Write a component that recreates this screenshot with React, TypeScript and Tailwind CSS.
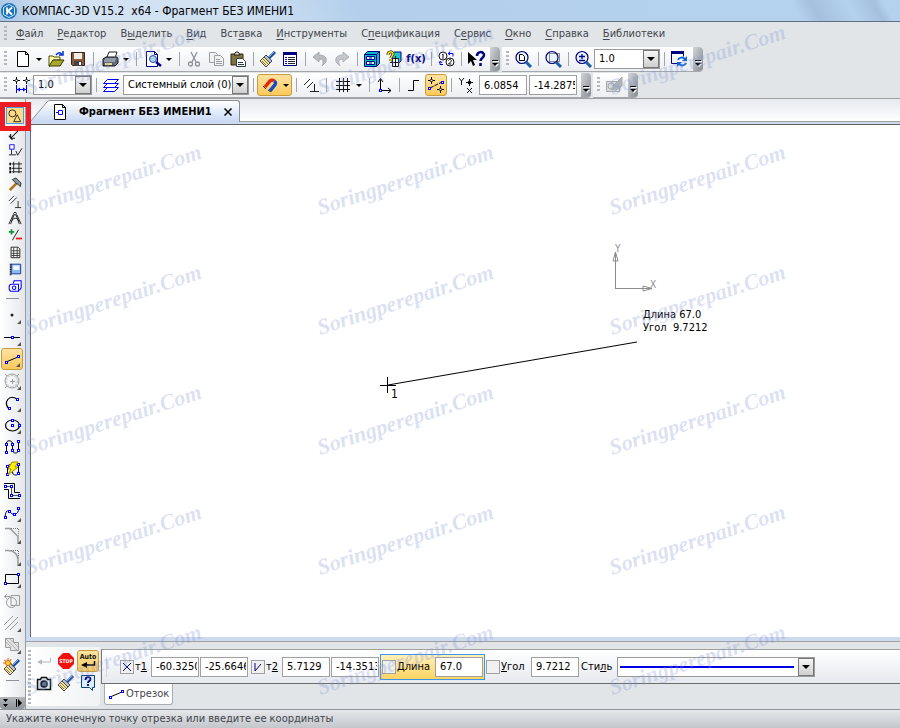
import type { ReactNode } from 'react';
import clsx from 'clsx';

const NAVY = '#000080';
const BLUE = '#0000ff';

const node = (x: number, y: number) => (
  <rect key={`${x}-${y}`} x={x - 0.5} y={y - 0.5} width="2" height="2" fill="#fff" stroke={BLUE} />
);

const brush = (
  <>
    <path d="M15 1L9 7" stroke="#1c4f9c" strokeWidth="3" />
    <path d="M14 1L9 6" stroke="#6fb1ea" />
    <path d="M6 4l6 6-2 2-6-6z" fill="#b9c3cc" stroke="#3c4650" />
    <path d="M4 6l6 6-4 4L0 10z" fill="#f3e3a8" stroke="#4a4a3a" />
    <path d="M3 8l5 5M2 10l4 4" stroke="#8c7a30" />
  </>
);

const lens = (
  <>
    <circle cx="7" cy="6.500" r="6" fill="#e8f4fb" stroke={NAVY} strokeWidth="1.200" />
    <path d="M11 11l5 5" stroke="#1d5fa8" strokeWidth="3" />
  </>
);

const ICONS: Record<string, ReactNode> = {
  new: <path d="M2.500 .5h8l3 3v12h-11zM10.500 .5v3h3" fill="#fff" stroke="#000" />,
  open: (
    <>
      <path d="M1 5h4l1 1h6v3H5l-3 6H1z" fill="#ffffb0" stroke="#4a4a00" />
      <path d="M5 9h11l-4 6H1z" fill="#a8a830" stroke="#3a3a00" />
      <path d="M8 4c2-3 5-3 6 0M11 4h4V0" fill="none" stroke="#0030d0" strokeWidth="1.500" />
    </>
  ),
  save: (
    <>
      <path d="M1.500 1.500h13v13h-12l-1-1z" fill="#8a5a3c" stroke="#33231a" />
      <path d="M4 2h8v6H4z" fill="#f1eee6" />
      <path d="M4 10h8v5H4z" fill="#444" />
      <path d="M9 11h2v3H9z" fill="#fff" />
    </>
  ),
  print: (
    <>
      <path d="M5 6l2-5h8l-2 6" fill="#fff" stroke="#222" />
      <path d="M1 8l3-2h11l1 2v4l-3 3H1z" fill="#5c6068" stroke="#15171a" />
      <path d="M3 8h11M2 10h11" stroke="#d5d8dd" />
      <path d="M3 12h7v2H3z" fill="#e2dc8c" />
    </>
  ),
  preview: (
    <>
      <path d="M1.500 .5h8l3 3v12h-11zM9.500 .5v3h3" fill="#fff" stroke={NAVY} />
      <circle cx="8" cy="8" r="3.500" fill="#a9d2f0" stroke="#2a4ca0" />
      <path d="M11 11l5 4" stroke={NAVY} strokeWidth="2.500" />
    </>
  ),
  cut: (
    <g fill="none" stroke="#8e9298" strokeWidth="1.300">
      <path d="M5 1l5 10M11 1L6 11" />
      <circle cx="4.500" cy="13" r="2" />
      <circle cx="11.500" cy="13" r="2" />
    </g>
  ),
  copy: (
    <g fill="#f2f2f2" stroke="#9a9ea3">
      <path d="M1.500 1.500h6l2 2v8h-8z" />
      <path d="M6.500 4.500h6l3 3v7h-9zM8 8.500h4M8 10.500h6M8 12.500h6" />
    </g>
  ),
  paste: (
    <>
      <path d="M1 3h12v11H1z" fill="#7c7440" stroke="#2c2914" />
      <path d="M4 4l1-2 1-1h2l1 1 1 2z" fill="#ded9ba" stroke="#222" />
      <path d="M6.500 7.500h6l3 3v5h-9zM8 11.500h5M8 13.500h6" fill="#fff" stroke="#303a48" />
    </>
  ),
  brush,
  props: (
    <>
      <path d="M1.500 1.500h13v13h-13z" fill="#fff" stroke={NAVY} />
      <path d="M1 1h14v3H1z" fill={NAVY} />
      <path d="M3 6.500h2M3 8.500h2M3 10.500h2M3 12.500h2" stroke={BLUE} />
      <path d="M6 6.500h7M6 8.500h7M6 10.500h7M6 12.500h7" stroke="#223" />
    </>
  ),
  undo: (
    <path d="M1 6l6-5v3c6 0 8 3 7 7l-4 4c2-4 2-7-3-7v3z" fill="#b9bdc2" stroke="#a4a8ad" />
  ),
  redo: (
    <path d="M15 6L9 1v3C3 4 1 7 2 11l4 4C4 11 4 8 9 8v3z" fill="#c3c7cb" stroke="#adb1b5" />
  ),
  library: (
    <>
      <path d="M.5 3.500l3-3h12v12l-3 3H.5z" fill="#00bcc8" stroke={NAVY} />
      <path d="M.5 3.500h12v12M12.500 3.500l3-3" fill="none" stroke={NAVY} />
      <path d="M2.500 5.500h8v3h-8zM2.500 10.500h8v3h-8z" fill="#dff" stroke={NAVY} />
      <path d="M5 7h3M5 12h3" stroke={NAVY} />
    </>
  ),
  variables: (
    <>
      <path d="M6 3l2-2h7v9l-2 2H6z" fill="#20c4cc" stroke={NAVY} />
      <path d="M6.500 7.500h6v8h-6zM4 11.500h10M9.500 5v11" fill="#fff" stroke="#111" />
      <path d="M2 4c0-4 5-4 5-1 0 2-2 2-2 4M5 8v2" fill="none" stroke="#333" strokeWidth="3" />
      <path d="M2 4c0-4 5-4 5-1 0 2-2 2-2 4M5 8v2" fill="none" stroke="#ffe200" strokeWidth="1.500" />
    </>
  ),
  swap: (
    <>
      <circle cx="5" cy="5" r="4" fill="#fff" stroke="#111" />
      <circle cx="12" cy="11" r="4" fill="#fff" stroke="#111" />
      <path d="M4 4l1-1v5M10.500 9.500c1-2 3-1 3 .5l-3 3h3" fill="none" stroke="#111" />
      <path d="M11 2.500h4v3M5 13.500H2v-3M1 12l1.500-2L4 12M12 1l-2 1.500L12 4" fill="none" stroke={BLUE} />
    </>
  ),
  whatsThis: (
    <>
      <path d="M0 1v12l3-3 2 5 2-1-2-5h4z" fill="#000" />
      <path d="M9 5c0-5 7-5 7-1 0 3-3.500 3-3.500 6M12.500 12v3" fill="none" stroke={NAVY} strokeWidth="2.500" />
    </>
  ),
  zoomPage: (
    <>
      {lens}
      <path d="M4.500 3.500h3l2 2v4h-5z" fill="#fff" stroke="#000" />
    </>
  ),
  zoomArea: (
    <>
      {lens}
      <path d="M4.500 2.500h10v8h-10z" fill="none" stroke="#222" strokeDasharray="1 1" />
    </>
  ),
  zoomStep: (
    <>
      {lens}
      <path d="M4 5.500h6M7 3v5M4 9.500h6" stroke={NAVY} strokeWidth="1.300" />
    </>
  ),
  refresh: (
    <>
      <path d="M.5 1.500h12v4M.5 1.500v11h6" fill="none" stroke={NAVY} />
      <path d="M0 0h13v3H0z" fill={NAVY} />
      <path d="M7 9c1-3 5-3 7-1M15 12c-1 3-5 3-7 1" fill="none" stroke="#1464dc" strokeWidth="2" />
      <path d="M16 5v5h-5zM6 16v-5h5z" fill="#1464dc" />
    </>
  ),
  step: (
    <>
      <path d="M0 3.500h7M3.500 0v7M10 3.500h7M13.500 0v7" stroke="#000" />
      <path d="M2 3.500L3.500 2 5 3.500 3.500 5zM12 3.500L13.500 2 15 3.500 13.500 5z" fill="#fff" stroke="#000" />
      <path d="M3.500 8v8M13.500 8v8M4 12.500h9" stroke={BLUE} />
      <path d="M4 12.500l3-2v4zM13 12.500l-3-2v4z" fill={BLUE} />
    </>
  ),
  layers: (
    <g fill="#fff" stroke={BLUE}>
      <path d="M.5 14.500l4-4h11l-4 4z" />
      <path d="M.5 10.500l4-4h11l-4 4z" />
      <path d="M.5 6.500l4-4h11l-4 4z" />
    </g>
  ),
  magnet: (
    <g fill="none" strokeWidth="3.500">
      <path d="M8 14l4-5c2-2 2-4 0-5" stroke="#1748c8" />
      <path d="M3 10l5-6c1-1 3-1 4 0" stroke="#e02a10" />
      <path d="M1 9l3 3M6 13l3 2" stroke="#333" strokeWidth="1" />
    </g>
  ),
  parallel: (
    <path d="M1 8l6-6M4 11l6-6M7 14.500h9M11.500 7v8" fill="none" stroke="#222" />
  ),
  grid: <path d="M4.500 1v14M8.500 1v14M12.500 1v14M1 4.500h14M1 8.500h14M1 12.500h14" stroke="#111" />,
  axes: (
    <>
      <path d="M4.500 2v11M4 13.500h11M2 5l2.500-3.500L7 5M12 11l3 2.500L12 16" fill="none" stroke="#000" />
      {node(4, 13)}
    </>
  ),
  ortho: <path d="M2 13.500h5.500v-10H13" fill="none" stroke="#000" />,
  snap: (
    <>
      <path d="M0 3.500h7M3.500 0v7M9 12.500h7M12.500 9v7" stroke="#000" />
      <path d="M2 3.500L3.500 2 5 3.500 3.500 5zM11 12.500l1.500-1.500 1.500 1.500-1.500 1.500z" fill="#ffe9a8" stroke="#000" />
      <path d="M2 11L14 5" stroke="#000" strokeDasharray="4 1" />
      {node(1, 11)}
      {node(14, 5)}
    </>
  ),
  coords: (
    <path
      d="M1 1l2.500 3L6 1M3.500 4v4M8 5.500h7M11.500 2v7M9.500 5.500l2-2 2 2-2 2zM9 11l5 5M14 11l-5 5"
      fill="none"
      stroke="#111"
    />
  ),
  sketch: (
    <g fill="#d5d8dc" stroke="#a6aaaf">
      <path d="M.5 4.500h13v10H.5z" />
      <circle cx="5" cy="9" r="3" />
      <path d="M5 12l5-6 6-6v9l-6 4z" fill="#b0b4b9" />
    </g>
  ),
  geometry: (
    <g fill="none" stroke="#1b1b1b">
      <circle cx="5" cy="5" r="4" />
      <path d="M10.500 6.500l-4 8h8z" />
    </g>
  ),
  dimension: (
    <path d="M3 14L14 3M3 9v5h5M1 11l4 5" fill="none" stroke="#111" strokeWidth="1.200" />
  ),
  marks: (
    <>
      <path d="M4 7v6M1 13.500h8M9 9l2 5 5-8" fill="none" stroke="#111" />
      <rect x="2" y="2" width="5" height="5" fill="#fff" stroke={BLUE} />
    </>
  ),
  table: (
    <>
      <path d="M6.500 2v13M12.500 2v13M4 4.500h12M4 9.500h12M4 13.500h12" stroke="#111" />
      <path d="M2.500 3v3M2.500 8v3M2.500 12v3" stroke="#111" strokeWidth="2" />
    </>
  ),
  hammer: (
    <>
      <path d="M2 15l8-8" stroke="#b0701c" strokeWidth="3" />
      <path d="M5 3l4-2 6 6-1 4-3-3-2-1z" fill="#8d969e" stroke="#23282c" />
    </>
  ),
  parametrize: <path d="M1 8l6-6M3 11l7-7M8 15.500h7M11.500 8v8" fill="none" stroke="#222" />,
  compass: (
    <g fill="none" stroke="#111">
      <path d="M7 4L3 15M9 4l4 11M4 12c2-5 6-5 9 0M1 15l5-11M15 15L10 4" />
      <circle cx="8" cy="3" r="1.500" fill="#fff" />
    </g>
  ),
  edit: (
    <>
      <path d="M1 4.500h6M4 1.500v6" stroke="#0a9a34" strokeWidth="2" />
      <path d="M9 12h7" stroke="#f01818" strokeWidth="2" />
      <path d="M5 14l7-12" stroke="#111" />
    </>
  ),
  spec: (
    <>
      <path d="M3.500 2.500h8l2 2v10h-10z" fill="#fff" stroke="#111" />
      <path d="M4 6.500h9M4 9.500h9M4 12h9M6.500 3v11M10.500 3v11" stroke="#333" />
    </>
  ),
  report: (
    <>
      <path d="M3.500 2.500h11v11h-11z" fill="#8fbaf0" stroke="#0a2f9c" />
      <path d="M6 4h7v5H6z" fill="#f4faff" />
      <path d="M3 2v13" stroke="#111" strokeWidth="2" strokeDasharray="1 1" />
    </>
  ),
  insert: (
    <g fill="#fff" stroke={BLUE} strokeWidth="1.200">
      <path d="M6 5l1-3h8v8l-2 3" />
      <path d="M4 6h8v8H3c-3-2-2-8 1-8z" />
      <circle cx="7" cy="10" r="2" />
    </g>
  ),
  point: <circle cx="8" cy="8" r="1.500" fill="#222" />,
  auxLine: (
    <>
      <path d="M0 8.500h16" stroke="#000" />
      {node(8, 8)}
    </>
  ),
  segment: (
    <>
      <path d="M2 11L14 6" stroke="#000" />
      {node(2, 11)}
      {node(14, 5)}
    </>
  ),
  circle: (
    <g fill="none" stroke="#9c9c9c">
      <circle cx="8" cy="8" r="7" />
      <circle cx="8" cy="8" r="5.500" strokeDasharray="2 1" strokeOpacity="0.6" />
      <path d="M6 8.500h5M8.500 6v5M1 1l2 2M15 1l-2 2M1 15l2-2M15 15l-2-2" />
    </g>
  ),
  arc: (
    <>
      <path d="M5 14C-1 7 5-1 13 4" fill="none" stroke="#000" strokeWidth="1.200" />
      {node(5, 13)}
      {node(13, 4)}
    </>
  ),
  ellipse: (
    <>
      <ellipse cx="8.500" cy="8.500" rx="7" ry="5.500" fill="none" stroke="#000" strokeWidth="1.200" />
      {node(8, 3)}
      {node(8, 8)}
      {node(15, 8)}
    </>
  ),
  spline: (
    <>
      <path d="M2.500 14V4c0-3 5-3 6 0v7c0 4 6 4 6 0V2" fill="none" stroke="#000" />
      {[[2, 13], [2, 5], [8, 5], [8, 11], [14, 11], [14, 2]].map(([x, y]) => node(x, y))}
    </>
  ),
  autoLine: (
    <>
      <path d="M3.500 14V6c0-3 5-3 5 0v5c0 4 6 4 6 0V3" fill="none" stroke="#000" />
      {[[3, 5], [3, 13], [14, 3], [14, 12]].map(([x, y]) => node(x, y))}
      <path d="M8 1h6l-3 5h3L4 14l3-6H4z" fill="#ffee00" stroke="#a08c00" />
    </>
  ),
  polyline: (
    <>
      <path d="M0 .5h10.500v9H16M0 6.500h4.500v9H16" fill="none" stroke="#000" />
      <path d="M2 3.500h5.500v9H15" fill="none" stroke="#555" />
      {[[1, 3], [7, 3], [7, 12], [15, 12]].map(([x, y]) => node(x, y))}
    </>
  ),
  bezier: (
    <>
      <path d="M1 12c1-9 4-6 6-4s7 3 8-5" fill="none" stroke={NAVY} />
      {[[1, 12], [5, 6], [10, 9], [14, 3]].map(([x, y]) => node(x, y))}
    </>
  ),
  chamfer: (
    <>
      <path d="M1 1.500h5l8 8V16" fill="none" stroke="#9a9a9a" strokeWidth="1.500" />
      <path d="M7 1.500h7.500v7" fill="none" stroke="#777" strokeDasharray="1 1" />
    </>
  ),
  fillet: (
    <>
      <path d="M1 1.500h3c6 0 10 4 10 9V16" fill="none" stroke="#9a9a9a" strokeWidth="1.500" />
      <path d="M7 1.500h7.500v7" fill="none" stroke="#777" strokeDasharray="1 1" />
    </>
  ),
  rectangle: (
    <>
      <path d="M1.500 3.500h13v9h-13z" fill="none" stroke="#000" />
      {node(14, 3)}
      {node(1, 12)}
    </>
  ),
  contour: (
    <g fill="none" stroke="#9a9a9a">
      <path d="M7 2.500h8.500v10H7zM0 3.500h6M3 1L.5 3.500 3 6" />
      <circle cx="7.500" cy="9.500" r="5" />
    </g>
  ),
  equidistant: <path d="M0 10L9 1M1 15L14 2M6 15l8-8" fill="none" stroke="#9a9a9a" />,
  hatch: (
    <>
      <path d="M1.500 1.500h8v4h5v8h-8v-3h-5z" fill="#e3e3e3" stroke="#9a9a9a" />
      <path d="M2 5l5 5M2 2l11 11M6 2l8 8" stroke="#b0b0b0" />
    </>
  ),
  styleBrush: (
    <>
      {brush}
      <circle cx="4" cy="4" r="2.500" fill="#ffdc20" stroke="#e05a10" />
      <path d="M4-1v2M-1 4h2M7 0L6 2M0 1l2 1M8 5L6 4" stroke="#e05a10" />
    </>
  ),
  enter: (
    <>
      <path d="M14.500 5v4H5" fill="none" stroke="#b4b8bc" />
      <path d="M6 6.500v5L1 9z" fill="#b4b8bc" />
    </>
  ),
  stop: (
    <>
      <path d="M5 0h6l5 5v6l-5 5H5l-5-5V5z" fill="#f01010" />
      <text x="8" y="10" fontSize="5" fontWeight="700" textAnchor="middle" fill="#fff">
        STOP
      </text>
    </>
  ),
  auto: (
    <>
      <text x="8" y="6" fontSize="7" fontWeight="700" textAnchor="middle" fill="#111">
        Auto
      </text>
      <path d="M14.500 8v4H5" fill="none" stroke="#000" strokeWidth="1.500" />
      <path d="M7 9v6l-6-3z" fill="#000" />
    </>
  ),
  camera: (
    <>
      <path d="M1.500 4.500h3l1-2h5l1 2h3v10h-13z" fill="#dde7ee" stroke="#111" strokeWidth="1.500" />
      <circle cx="8" cy="9" r="3" fill="#5c7890" stroke="#111" strokeWidth="1.500" />
    </>
  ),
  help: (
    <>
      <path d="M1.500 .5h13v12h-2v3l-3-3h-8z" fill="#dceefa" stroke="#0a3f78" />
      <path d="M5.500 5c0-4 5-3.500 5-1 0 2-2.500 2-2.500 4M8 9v2" fill="none" stroke={NAVY} strokeWidth="1.800" />
    </>
  ),
  fragment: (
    <>
      <path d="M2.500 .5h8l3 3v12h-11zM10.500 .5v3h3" fill="#fff" stroke="#000" />
      <path d="M4 8.500h2.500v-2h4v4h-4v-2" fill="none" stroke={BLUE} />
    </>
  ),
};

const Icon = ({ name, small }: { name: string; small?: boolean }) => (
  <svg
    viewBox="0 0 16 16"
    className={clsx('shrink-0 overflow-visible', small ? 'size-[14px]' : 'size-4')}
    aria-hidden="true"
  >
    {ICONS[name]}
  </svg>
);

type ToolProps = {
  icon: string;
  label: string;
  menu?: boolean;
  active?: boolean;
};

const ACTIVE = 'rounded-[3px] border border-[#c79a3b] bg-linear-to-b from-[#fde3a0] to-[#fbc95a]';

const Tool = ({ icon, label, menu, active }: ToolProps) => (
  <button
    aria-label={label}
    className={clsx(
      'flex h-[22px] shrink-0 items-center justify-center',
      menu ? 'w-[35px] gap-1 pl-px' : 'w-[22px]',
      active && ACTIVE,
    )}
  >
    <Icon name={icon} />
    {menu && <span className="ml-px border-x-3 border-t-3 border-x-transparent border-t-black" />}
  </button>
);

const Sep = () => <span className="ml-1 mr-[3px] h-[14px] w-px shrink-0 bg-[#a2a6ac]" />;

const Grip = () => (
  <span className="ml-1 mr-[3px] h-4 w-[3px] shrink-0 bg-[repeating-linear-gradient(#b4b8be_0_2px,transparent_2px_4px)]" />
);

const Toolbar = ({ label, children }: { label: string; children: ReactNode }) => (
  <div
    role="toolbar"
    aria-label={label}
    className="flex h-[25px] items-center overflow-hidden rounded-r-[4px] border-b border-[#a4a7ab] bg-linear-to-b from-white to-[#eceef2]"
  >
    <Grip />
    {children}
    <button
      aria-label="Параметры панели"
      className="ml-[3px] flex h-full w-[10px] items-end justify-center bg-linear-to-br from-[#d2d5d9] to-[#878c93] pb-1"
    >
      <svg viewBox="0 0 7 7" className="size-[7px]">
        <path d="M1 1.500h6" stroke="#fff" />
        <path d="M0 .5h6" stroke="#000" />
        <path d="M1 4h6L4 7z" fill="#fff" />
        <path d="M0 3h6L3 6z" fill="#000" />
      </svg>
    </button>
  </div>
);

type ComboProps = {
  label: string;
  value?: string;
  className: string;
  children?: ReactNode;
};

const Combo = ({ label, value, className, children }: ComboProps) => (
  <div className={clsx('relative h-5 shrink-0 border border-[#9a9a9a] bg-white', className)}>
    <select aria-label={label} className="block h-full w-full appearance-none pl-1 pr-4 outline-none">
      <option>{value}</option>
    </select>
    {children}
    <span className="pointer-events-none absolute inset-y-0 right-0 flex w-4 items-center justify-center border border-[#777] bg-linear-to-b from-[#f6f6f6] to-[#cfcfcf]">
      <span className="border-x-4 border-t-4 border-x-transparent border-t-black" />
    </span>
  </div>
);

const Field = ({ label, value }: { label: string; value: string }) => (
  <input
    aria-label={label}
    defaultValue={value}
    className="h-5 w-12 shrink-0 border border-[#a0a0a0] bg-white pl-1 pr-px outline-none"
  />
);

const Check = ({ id, mark }: { id: string; mark?: string }) => (
  <span className="relative size-[14px] shrink-0">
    <input
      id={id}
      type="checkbox"
      defaultChecked={Boolean(mark)}
      className="block size-full appearance-none border border-[#a0a0a0] bg-[#f0f0f0]"
    />
    {mark && (
      <svg viewBox="0 0 14 14" className="pointer-events-none absolute inset-0">
        <path d={mark} fill="none" stroke={NAVY} />
      </svg>
    )}
  </span>
);

// [text before the mnemonic, mnemonic, rest]
const MENU = [
  ['', 'Ф', 'айл'],
  ['', 'Р', 'едактор'],
  ['В', 'ы', 'делить'],
  ['', 'В', 'ид'],
  ['Вст', 'а', 'вка'],
  ['', 'И', 'нструменты'],
  ['С', 'п', 'ецификация'],
  ['С', 'е', 'рвис'],
  ['', 'О', 'кно'],
  ['', 'С', 'правка'],
  ['', 'Б', 'иблиотеки'],
];

const PANELS = [
  ['geometry', 'Геометрия'],
  ['dimension', 'Размеры'],
  ['marks', 'Обозначения'],
  ['table', 'Обозначения для строительства'],
  ['hammer', 'Редактирование'],
  ['parametrize', 'Параметризация'],
  ['compass', 'Измерения'],
  ['edit', 'Выделение'],
  ['spec', 'Спецификация'],
  ['report', 'Отчеты'],
  ['insert', 'Вставки и макроэлементы'],
];

const COMMANDS: { icon: string; label: string; more: boolean }[] = [
  { icon: 'point', label: 'Точка', more: true },
  { icon: 'auxLine', label: 'Вспомогательная прямая', more: true },
  { icon: 'segment', label: 'Отрезок', more: true },
  { icon: 'circle', label: 'Окружность', more: true },
  { icon: 'arc', label: 'Дуга', more: true },
  { icon: 'ellipse', label: 'Эллипс', more: true },
  { icon: 'spline', label: 'Непрерывный ввод объектов', more: false },
  { icon: 'autoLine', label: 'Автолиния', more: false },
  { icon: 'polyline', label: 'Мультилиния', more: false },
  { icon: 'bezier', label: 'Кривая Безье', more: true },
  { icon: 'chamfer', label: 'Фаска', more: true },
  { icon: 'fillet', label: 'Скругление', more: true },
  { icon: 'rectangle', label: 'Прямоугольник', more: true },
  { icon: 'contour', label: 'Собрать контур', more: false },
  { icon: 'equidistant', label: 'Эквидистанта', more: true },
  { icon: 'hatch', label: 'Штриховка', more: true },
  { icon: 'styleBrush', label: 'Изменить стиль', more: false },
];

const TitleBar = () => (
  <header className="flex h-[22px] items-center gap-1 border-b border-[#5f7084] bg-[linear-gradient(60deg,#a9c6e4_0%,#d3e3f3_8%,#cfe0f2_28%,#b3cfec_40%,#b4d1ed_88%,#a4c0de_90%,#b4d1ed_94%,#a4c0de_97%,#b4d1ed_98%)] px-px text-[12px] text-black">
    <svg viewBox="0 0 16 16" className="size-4">
      <circle cx="8" cy="8" r="8" fill="#1b74b8" />
      <path d="M8 1.500l5.500 3v7L8 14.500l-5.500-3v-7z" fill="none" stroke="#cfe8f8" />
      <path d="M6 4.500v7M11 4.500L7 8l4 3.500" fill="none" stroke="#fff" strokeWidth="1.800" />
    </svg>
    <h1 className="whitespace-pre pl-px">КОМПАС-3D V15.2  x64 - Фрагмент БЕЗ ИМЕНИ1</h1>
  </header>
);

const MenuBar = () => (
  <nav className="flex h-6 items-center text-[#42464c]">
    <Grip />
    <div className="flex gap-[14px] pl-[6px]">
      {MENU.map(([before, key, after]) => (
        <button key={key + after} className="whitespace-nowrap">
          {before}
          <u className="underline-offset-2">{key}</u>
          {after}
        </button>
      ))}
    </div>
  </nav>
);

const Toolbars = () => (
  <div className="flex flex-col gap-px border-b border-[#a0a0a0]">
    <div className="flex gap-[2px] pt-px">
      <Toolbar label="Стандартная">
        <Tool icon="new" label="Создать" menu />
        <Tool icon="open" label="Открыть" />
        <Tool icon="save" label="Сохранить" />
        <Sep />
        <Tool icon="print" label="Печать" menu />
        <Sep />
        <Tool icon="preview" label="Предварительный просмотр" menu />
        <Sep />
        <Tool icon="cut" label="Вырезать" />
        <Tool icon="copy" label="Копировать" />
        <Tool icon="paste" label="Вставить" />
        <Sep />
        <Tool icon="brush" label="Копировать свойства" />
        <Tool icon="props" label="Свойства" />
        <Sep />
        <Tool icon="undo" label="Отменить" />
        <Tool icon="redo" label="Повторить" />
        <Sep />
        <Tool icon="library" label="Менеджер библиотек" />
        <Tool icon="variables" label="Переменные" />
        <button aria-label="Функция" className="flex w-[22px] justify-center text-[11px] font-bold text-[#000080]">
          f(x)
        </button>
        <Sep />
        <Tool icon="swap" label="Перестроить" />
        <Sep />
        <Tool icon="whatsThis" label="Что это?" />
      </Toolbar>
      <Toolbar label="Вид">
        <Tool icon="zoomPage" label="Показать все" />
        <Sep />
        <Tool icon="zoomArea" label="Увеличить рамкой" />
        <Sep />
        <Tool icon="zoomStep" label="Приблизить" />
        <Combo label="Масштаб" value="1.0" className="w-[66px]" />
        <Sep />
        <Tool icon="refresh" label="Обновить изображение" />
      </Toolbar>
    </div>
    <div className="flex gap-[2px]">
      <Toolbar label="Текущее состояние">
        <Tool icon="step" label="Шаг курсора" />
        <Combo label="Шаг" value="1.0" className="ml-px w-[59px]" />
        <Sep />
        <Tool icon="layers" label="Слои" />
        <Combo label="Слой" value="Системный слой (0)" className="ml-px w-[126px]" />
        <Sep />
        <Tool icon="magnet" label="Привязки" menu active />
        <Sep />
        <Tool icon="parallel" label="Параметрический режим" />
        <Sep />
        <Tool icon="grid" label="Сетка" menu />
        <Sep />
        <Tool icon="axes" label="Локальная СК" />
        <Sep />
        <Tool icon="ortho" label="Ортогональное черчение" />
        <Tool icon="snap" label="Округление" active />
        <Sep />
        <Tool icon="coords" label="Координаты курсора" />
        <div className="flex gap-[2px] pl-[2px] pr-px">
          <Field label="Координата X" value="6.0854" />
          <Field label="Координата Y" value="-14.2875" />
        </div>
      </Toolbar>
      <Toolbar label="Режимы">
        <Tool icon="sketch" label="Эскиз" />
      </Toolbar>
    </div>
  </div>
);

const Sidebar = () => (
  <aside className="flex w-[26px] shrink-0 flex-col border-r border-[#9a9da1] bg-linear-to-r from-white to-[#e4e7ea]">
    <div className="relative flex flex-col items-center pl-1 pt-2">
      {PANELS.map(([icon, label], i) => (
        <button
          key={icon}
          aria-label={label}
          className={clsx(
            'flex h-[17px] w-[18px] items-center justify-center',
            i === 0 && 'border border-[#4d9be8] bg-[#fddc84]',
          )}
        >
          <Icon name={icon} small />
        </button>
      ))}
      <span className="pointer-events-none absolute left-0 top-[3px] h-[29px] w-[31px] border-5 border-[#ed1c24]" />
    </div>
    <hr className="mx-[6px] mb-[5px] mt-1 border-[#8e9196]" />
    <div className="flex flex-col pl-[1px]">
      {COMMANDS.map(({ icon, label, more }) => (
        <button
          key={icon}
          aria-label={label}
          className={clsx(
            'relative flex size-[22px] items-center justify-center',
            icon === 'segment' && ACTIVE,
          )}
        >
          <Icon name={icon} />
          {more && (
            <svg viewBox="0 0 4 4" className="absolute bottom-0.5 right-0.5 size-1">
              <path d="M4 0v4H0z" fill="#555" />
            </svg>
          )}
        </button>
      ))}
    </div>
    <hr className="mx-[6px] mt-[2px] border-[#8e9196]" />
    <div className="mt-auto flex h-3 items-center justify-center gap-2 rounded-b-[3px] bg-linear-to-b from-[#b4b8bd] to-[#8e9399]">
      <svg viewBox="0 0 5 8" className="h-2 w-[5px]">
        <path d="M0 0h5L2.500 3zM0 5h5L2.500 8z" fill="#000" />
      </svg>
      <svg viewBox="0 0 7 8" className="h-2 w-[7px]">
        <path d="M.5 0v8" stroke="#000" />
        <path d="M2 0l4 4-4 4z" fill="#000" />
      </svg>
    </div>
  </aside>
);

const DocumentTabs = () => (
  <div className="flex h-[23px] items-end border-b border-[#a0a0a0] bg-linear-to-b from-[#e6e9ee] to-white">
    <div className="-mb-px flex h-[22px] pl-1">
      <svg viewBox="0 0 20 22" className="h-[22px] w-5">
        <defs>
          <linearGradient id="tab" x1="0" y1="0" x2="0" y2="1">
            <stop offset="0" stopColor="#fff" />
            <stop offset="1" stopColor="#c8d9f4" />
          </linearGradient>
        </defs>
        <path d="M0 22L17 2q1-1 3-1v21z" fill="url(#tab)" />
        <path d="M0 22L17 2q1-1.500 3-1.500" fill="none" stroke="#8a8d92" />
      </svg>
      <div className="flex items-center rounded-tr-[3px] border-r border-t border-[#8a8d92] bg-linear-to-b from-white to-[#c8d9f4] pl-[2px] pr-[6px]">
        <Icon name="fragment" />
        <button className="whitespace-nowrap pl-[11px] font-bold text-black">Фрагмент БЕЗ ИМЕНИ1</button>
        <button aria-label="Закрыть" className="ml-[11px] p-px">
          <svg viewBox="0 0 8 8" className="size-2">
            <path d="M.5.5l7 7M7.500.5l-7 7" stroke="#000" strokeWidth="1.500" />
          </svg>
        </button>
      </div>
    </div>
  </div>
);

const Drawing = () => (
  <main className="relative flex-1 overflow-hidden bg-white">
    <svg className="absolute inset-0 size-full text-[11px]">
      <path d="M349 260.500h16M356.500 252v16" stroke="#000" />
      <path d="M357 260L606 217" stroke="#000" />
      <g fill="none" stroke="#8c8c8c">
        <path d="M584.500 163v-36l-2.500 9h5l-2.500-9" />
        <path d="M584 163.500h37l-9-2.500v5l9-2.500" />
      </g>
      <text x="584" y="127" fill="#8c8c8c" className="text-[10px]">Y</text>
      <text x="619" y="163" fill="#8c8c8c" className="text-[10px]">X</text>
      <text x="360" y="273" className="text-[12px]">1</text>
      <text x="612" y="193">Длина 67.0</text>
      <text x="612" y="206" xmlSpace="preserve">Угол  9.7212</text>
    </svg>
  </main>
);

const PropertyPanel = () => (
  <section className="flex h-[67px] bg-[#e1e5e8] pt-[5px]">
    <div className="mb-[3px] flex w-[74px] rounded-b-[4px] bg-linear-to-r from-white to-[#f2f3f5] pt-[3px]">
      <span className="ml-[2px] mr-[2px] h-14 w-[3px] shrink-0 bg-[repeating-linear-gradient(#b4b8be_0_2px,transparent_2px_4px)]" />
      <div className="grid grid-cols-3 content-start">
        <Tool icon="enter" label="Создать объект" />
        <Tool icon="stop" label="Прервать команду" />
        <Tool icon="auto" label="Автосоздание" active />
        <Tool icon="camera" label="Запомнить состояние" />
        <Tool icon="brush" label="Копировать свойства" />
        <Tool icon="help" label="Справка" />
      </div>
    </div>
    <div className="ml-px min-w-0 flex-1 pt-[2px]">
      <div className="flex h-[35px] items-center overflow-hidden border-y border-l border-b-[#6c6c6c] border-l-[#777] border-t-[#a0a0a0] bg-linear-to-b from-white to-[#e6e9ee]">
        <span className="ml-1 mr-[13px] h-5 w-[1px] shrink-0 bg-[#d3d6da]" />
        <Check id="point1" mark="M3 3l8 8M11 3l-8 8" />
        <label htmlFor="point1" className="w-[17px] pl-px">т<u>1</u></label>
        <Field label="X1" value="-60.3250" />
        <span className="w-px" />
        <Field label="Y1" value="-25.6646" />
        <span className="w-[3px]" />
        <Check id="point2" mark="M4 3v8l6-7" />
        <label htmlFor="point2" className="w-[17px] pl-px">т<u>2</u></label>
        <div className="flex gap-px">
          <Field label="X2" value="5.7129" />
          <Field label="Y2" value="-14.3513" />
        </div>
        <div className="ml-px flex h-[26px] items-center border border-[#3c97ec] bg-linear-to-b from-[#fff0b8] to-[#fdd45e] px-[1px]">
          <Check id="length" />
          <label htmlFor="length" className="w-[39px] pl-px"><u>Д</u>лина</label>
          <Field label="Значение длины" value="67.0" />
        </div>
        <span className="w-px" />
        <Check id="angle" />
        <label htmlFor="angle" className="w-[31px] pl-px"><u>У</u>гол</label>
        <Field label="Значение угла" value="9.7212" />
        <span className="w-9 shrink-0 pl-[2px]">Сти<u>л</u>ь</span>
        <Combo label="Стиль линии" className="ml-[2px] w-[198px]">
          <span className="pointer-events-none absolute left-[2px] right-5 top-2 h-[2px] bg-[#0000e6]" />
        </Combo>
      </div>
      <button className="ml-[3px] flex h-[21px] items-center gap-[2px] rounded-b-[3px] border border-t-0 border-[#a9adb2] bg-white px-[3px] text-[#42464c]">
        <Icon name="segment" />
        Отрезок
      </button>
    </div>
  </section>
);

const WATERMARKS = [0, 1, 2].flatMap((col) =>
  [0, 1, 2, 3, 4, 5].map((row) => ({ x: 28 + col * 292, y: 95 + row * 120 })),
);

const Watermark = () => (
  <svg
    aria-hidden="true"
    className="pointer-events-none absolute inset-0 size-full select-none font-['Liberation_Serif',serif] text-[22px] font-bold italic"
  >
    {WATERMARKS.map(({ x, y }) => (
      <text key={`${x}-${y}`} transform={`translate(${x} ${y}) rotate(-18)`} fill="#7f92d2" fillOpacity="0.28">
        Soringperepair.Com
      </text>
    ))}
  </svg>
);

const App = () => {
  return (
    <div className="relative flex min-h-screen flex-col overflow-hidden bg-[#e1e5e8] font-['DejaVu_Sans_Condensed','DejaVu_Sans',sans-serif] text-[11px] leading-[14px] text-black">
      <TitleBar />
      <MenuBar />
      <Toolbars />
      <div className="flex flex-1">
        <Sidebar />
        <div className="flex min-w-0 flex-1 flex-col">
          <DocumentTabs />
          <div className="flex flex-1 flex-col border-b border-[#a0a0a0] bg-[#cddaf0] pb-1 pl-1 pt-[2px]">
            <div className="flex flex-1 border-l border-t border-[#666]">
              <Drawing />
            </div>
          </div>
          <PropertyPanel />
        </div>
      </div>
      <footer className="flex h-[19px] items-center border-t border-[#8f949a] bg-linear-to-b from-[#e6e8eb] to-[#c3c7cc] pl-[6px] text-[#42464c]">
        Укажите конечную точку отрезка или введите ее координаты
      </footer>
      <Watermark />
    </div>
  );
};

export default App;
